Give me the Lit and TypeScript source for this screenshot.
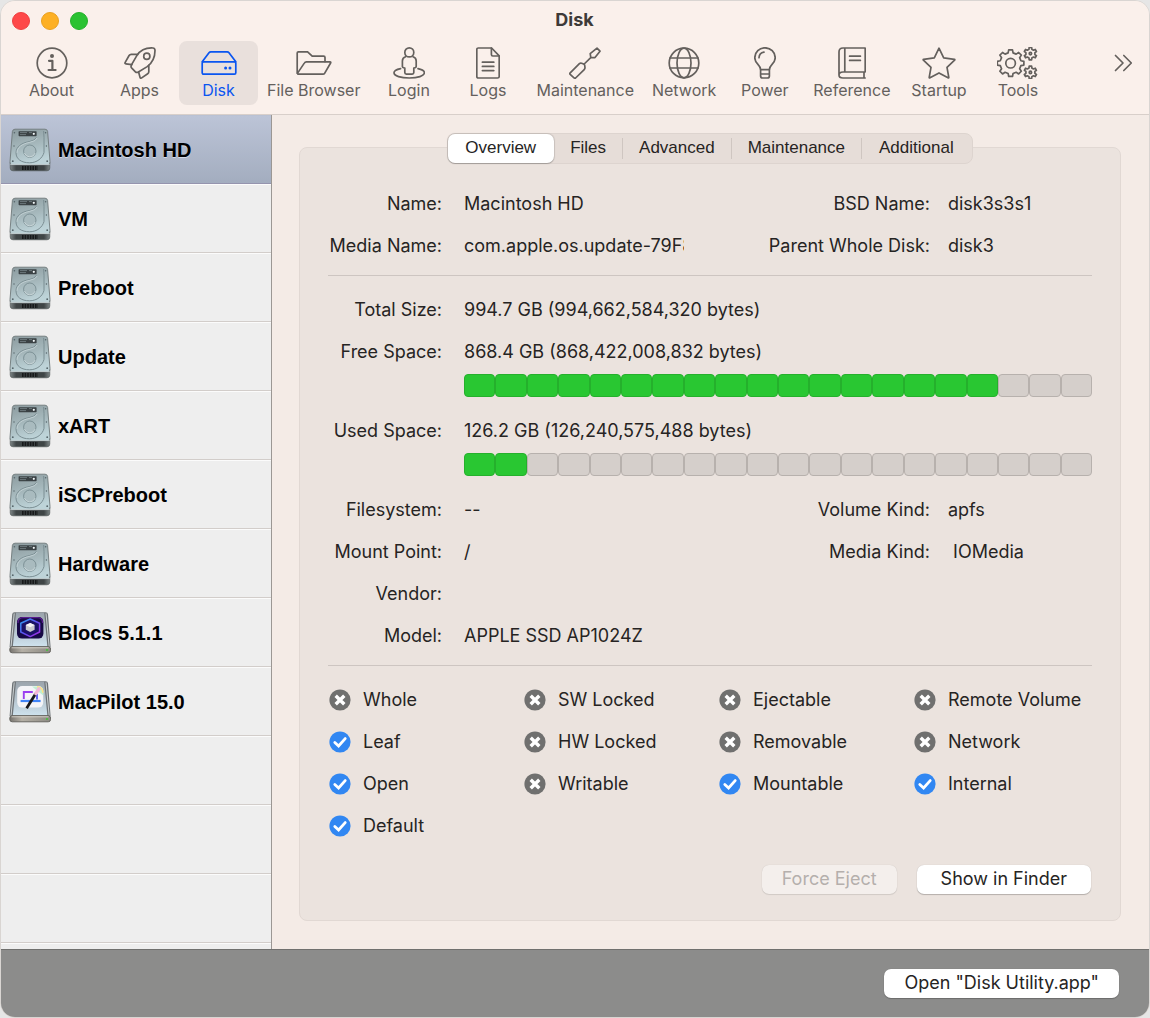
import { LitElement, html, svg, css, nothing, type SVGTemplateResult } from "lit";
import { customElement, property, state } from "lit/decorators.js";
import { classMap } from "lit/directives/class-map.js";

/** Outline of a cog: teeth between an inner and an outer radius. */
function gear(cx: number, cy: number, inner: number, outer: number, teeth: number): string {
  const step = (Math.PI * 2) / teeth;
  const at = (r: number, a: number) =>
    `${(cx + r * Math.sin(a)).toFixed(2)} ${(cy - r * Math.cos(a)).toFixed(2)}`;
  const points: string[] = [];
  for (let i = 0; i < teeth; i++) {
    const a = i * step;
    points.push(
      at(inner, a - step * 0.3),
      at(outer, a - step * 0.18),
      at(outer, a + step * 0.18),
      at(inner, a + step * 0.3),
    );
  }
  return `M${points.join("L")}Z`;
}

interface Glyph {
  width: number;
  art: SVGTemplateResult;
}

const glyphs: Record<string, Glyph> = {
  about: {
    width: 32,
    art: svg`<circle cx="16" cy="16" r="14.8"/><circle cx="16" cy="9" r="2" class="solid"/>
      <path d="M13 13.8h3.4v9M12.6 23h7" stroke-width="2.2"/>`,
  },
  apps: {
    width: 32,
    art: svg`<path d="M29 1C22 .6 16.5 3 12.8 8.6L7.6 17.6c-.9 1.6-.8 2.6.2 3.6l3.6 3.6c.9.9 1.8.9 3 .2l8.8-5.4C28.8 15.4 31 10 31 3.4 31 1.8 30.5 1.1 29 1z"/>
      <circle cx="22.8" cy="9.3" r="3.1"/>
      <path d="M13.6 7.4H7.2c-1 0-1.600.3-2.100 1.100L1.200 15.400c-.5.9-.2 1.400.7 1.500l6 .7M24.800 18.400v6.300c0 .9-.3 1.500-1.100 2l-6 4.200c-.8.500-1.500.3-1.700-.6L14.600 25"/>`,
  },
  disk: {
    width: 36,
    art: svg`<path d="M1.200 14.800 8 5.700Q8.700 4.800 9.800 4.800H26.200Q27.300 4.800 28 5.700L34.800 14.800" />
      <rect x="1.200" y="14.800" width="33.600" height="12.400" rx="1.400"/>
      <circle cx="24.600" cy="21" r="1.500" class="solid"/><circle cx="29" cy="21" r="1.500" class="solid"/>`,
  },
  files: {
    width: 36,
    art: svg`<path d="M1.200 26V6Q1.200 4.800 2.400 4.800H11.600L16.200 9.200H27.600Q29 9.200 29 10.600V14.600"/>
      <path d="M2 27.200H27Q28.100 27.200 28.600 26.300L34.600 16Q35.200 14.900 34 14.900H10.400Q9 14.900 8.300 16.100L1.400 26.400"/>`,
  },
  login: {
    width: 32,
    art: svg`<circle cx="16.300" cy="5.400" r="4.500"/>
      <path d="M12.600 9.700Q9.400 10.600 9.400 14V19.600Q9.400 20.800 11.800 21.200V25.600Q11.800 27.200 13.400 27.200H19.200Q20.800 27.200 20.800 25.600V21.200Q23.200 20.800 23.200 19.600V14Q23.200 10.600 20 9.700"/>
      <path d="M7.600 21.600C3.600 22.400 1 23.800 1 25.800 1 29 8 31 16.300 31S31.400 29 31.400 25.800C31.400 23.800 29 22.400 25 21.600"/>`,
  },
  logs: {
    width: 24,
    art: svg`<path d="M2.200 1H15.600L23.200 8.800V29.400Q23.200 31 21.600 31H2.400Q.8 31 .8 29.400V2.400Q.8 1 2.200 1z"/>
      <path d="M15.400 1.200V7.600Q15.400 9 16.800 9H23M6.400 15.200H17.800M6.400 19.400H17.800M6.400 23.600H17.800"/>`,
  },
  maintenance: {
    width: 32,
    art: svg`<path d="M1.200 25.800 10.400 16.600Q11.400 15.800 12.600 16.200L14.600 17Q15.600 17.400 15.700 18.400L16 20.800Q16 21.800 15.200 22.600L6.600 31Q5.800 31.500 5 30.800L1.200 27.400Q.5 26.600 1.200 25.800z"/>
      <path d="M15.200 17 22 10.400M21.800 10.600 21.200 6.600 28 1.200 31 4.200 26 10.600z"/>`,
  },
  network: {
    width: 32,
    art: svg`<circle cx="16" cy="16" r="14.800"/><ellipse cx="16" cy="16" rx="7" ry="14.800"/>
      <path d="M2 11H30M2 21H30"/>`,
  },
  power: {
    width: 22,
    art: svg`<path d="M6.600 22.600C6.600 17.600.8 17 .8 10.800A10.200 10 0 0 1 21.200 10.800C21.200 17 15.400 17.600 15.400 22.600z"/>
      <path d="M6.600 22.600V29Q6.600 31 8.600 31H13.400Q15.400 31 15.400 29V22.600M6.600 27H15.400M5 10.800A6 6 0 0 1 10 5.200"/>`,
  },
  reference: {
    width: 28,
    art: svg`<path d="M27.200 1V25H5Q1 25 1 28 1 31 5 31H27.200M26 25V31M1 28V5Q1 1 5 1H27.200M6.800 1V25"/>
      <path d="M11.600 9.200H22.400M11.600 13.400H22.400"/>`,
  },
  startup: {
    width: 34,
    art: svg`<path d="M17 1.200 21.700 10.900 32.400 12.400Q33.200 12.600 32.600 13.200L25 20.400 26.800 30.400Q26.900 31.200 26 30.800L17 25.900 8 30.800Q7.100 31.200 7.200 30.400L9 20.400 1.400 13.200Q.8 12.600 1.600 12.400L12.300 10.900z"/>`,
  },
  tools: {
    width: 41,
    art: svg`<path d=${gear(13.6, 16.2, 10.6, 13.4, 8)}/><circle cx="13.600" cy="16.200" r="4.800"/>
      <path d=${gear(33.4, 6.6, 4.6, 6.4, 6)}/><circle cx="33.400" cy="6.600" r="1.200"/>
      <path d=${gear(33.4, 25.4, 4.6, 6.4, 6)}/><circle cx="33.400" cy="25.400" r="1.200"/>`,
  },
};

@customElement("tool-button")
export class ToolButton extends LitElement {
  @property() label = "";
  @property() glyph = "about";
  @property({ type: Boolean, reflect: true }) selected = false;

  static styles = css`
    :host {
      display: block;
    }
    .tool {
      box-sizing: border-box;
      display: flex;
      flex-direction: column;
      align-items: center;
      gap: 1px;
      width: 100%;
      min-width: 79px;
      height: 64px;
      margin: 0;
      padding: 6px 9px 0;
      border: 0;
      border-radius: 8px;
      background: none;
      color: #64605d;
      font: 16px/20px Inter, "Liberation Sans", sans-serif;
      white-space: nowrap;
    }
    .selected {
      background: #e9e0dc;
      color: #0a55f0;
    }
    .icon {
      display: block;
      height: 32px;
      fill: none;
      stroke: currentColor;
      stroke-width: 1.7;
      stroke-linejoin: round;
      stroke-linecap: round;
    }
    .solid {
      fill: currentColor;
      stroke: none;
    }
  `;

  render() {
    const g = glyphs[this.glyph];
    return html`<button
      class=${classMap({ tool: true, selected: this.selected })}
      aria-pressed=${this.selected ? "true" : "false"}
    >
      <svg class="icon" width=${g.width} height="32" viewBox="0 0 ${g.width} 32" aria-hidden="true">
        ${g.art}
      </svg>
      ${this.label}
    </button>`;
  }
}

@customElement("drive-icon")
export class DriveIcon extends LitElement {
  @property() kind = "internal";

  static styles = css`
    :host {
      display: block;
      flex: none;
    }
    svg {
      display: block;
    }
  `;

  private internal() {
    return svg`
      <defs>
        <linearGradient id="lid" x1="0" y1="0" x2=".3" y2="1">
          <stop offset="0" stop-color="#8b9a9e"/><stop offset=".5" stop-color="#a3b5b9"/><stop offset="1" stop-color="#bdd3d8"/>
        </linearGradient>
        <linearGradient id="base" x1="0" y1="0" x2="1" y2="0">
          <stop offset="0" stop-color="#7d8586"/><stop offset=".15" stop-color="#3f4546"/><stop offset=".85" stop-color="#3f4546"/><stop offset="1" stop-color="#7d8586"/>
        </linearGradient>
      </defs>
      <path d="M1.200 34h39.600v6q0 2.800-2.800 2.800H4Q1.200 42.800 1.200 40z" fill="url(#base)" stroke="#4c5253" stroke-width=".6"/>
      <path d="M6 1.200h30q2.200 0 2.600 2.200L41 33.600q.2 3.200-2.200 3.200H3.200Q.8 36.800 1 33.600L3.400 3.400Q3.800 1.200 6 1.200z" fill="url(#lid)" stroke="#6f797b" stroke-width=".9"/>
      <path d="M1.400 36.400h39.200" stroke="#d4e0e2" stroke-width=".8"/>
      <path d="M13 39h16M13 41h16" stroke="#17191a" stroke-width="1.800" stroke-dasharray="1.600 1"/>
      <rect x="9.600" y="3.200" width="18" height="5" rx=".6" fill="#3a4144"/>
      <path d="M11 4.600h7M11 6.600h6M20 4.600h3" stroke="#78858a" stroke-width=".8"/>
      <circle cx="24.800" cy="5.800" r="1.100" fill="#f2f7f8"/>
      <path d="M27.400 9.400q-1 3-7.200 4.200C12.400 15 7 18.800 7 24.800c0 6.400 5.600 10 13.400 10 7.800 0 13.200-4.800 14.600-10.400V9.400L34.600 3" fill="none" stroke="#7b8e93" stroke-width="1"/>
      <path d="M28.200 10q-1 3-7.800 4.400C13 15.800 8 19.400 8 24.800" fill="none" stroke="#d0dde0" stroke-width=".7"/>
      <circle cx="20.800" cy="23.200" r="6.200" fill="#a9bbbf" stroke="#71858a" stroke-width=".8"/>
      <path d="M15.400 25.200a5.800 5.800 0 0 0 10.800 0" fill="none" stroke="#dce8ea" stroke-width=".7"/>
      <g fill="#56656a"><circle cx="5.400" cy="4.800" r=".8"/><circle cx="36.600" cy="4.800" r=".8"/><circle cx="5" cy="18" r=".7"/><circle cx="37.400" cy="18" r=".7"/><circle cx="3.800" cy="33.200" r=".9"/><circle cx="38.200" cy="33.200" r=".9"/></g>`;
  }

  private external(badge: SVGTemplateResult) {
    return svg`
      <defs>
        <linearGradient id="top" x1="0" y1="0" x2="0" y2="1">
          <stop offset="0" stop-color="#9aa3ab"/><stop offset=".5" stop-color="#b5c3cd"/><stop offset="1" stop-color="#cfe3ee"/>
        </linearGradient>
        <linearGradient id="front" x1="0" y1="0" x2="1" y2="0">
          <stop offset="0" stop-color="#77746f"/><stop offset=".3" stop-color="#b5b0a6"/><stop offset="1" stop-color="#8d8a83"/>
        </linearGradient>
        <linearGradient id="hex" x1="0" y1="0" x2="1" y2="1">
          <stop offset="0" stop-color="#2fa5f2"/><stop offset=".5" stop-color="#5d4df0"/><stop offset="1" stop-color="#a92be0"/>
        </linearGradient>
      </defs>
      <path d="M5.600 1.200h31q2.200 0 2.400 2L41.600 36H.6L3.200 3.200q.2-2 2.400-2z" fill="#6d7276"/>
      <path d="M5.200 2.400 2 36M37 2.400 40.200 36" stroke="#d7dcde" stroke-width=".9"/>
      <path d="M7 1.400h28.200L38.400 36H3.800z" fill="url(#top)"/>
      <rect x=".8" y="35.600" width="40.800" height="6.200" rx="2.400" fill="url(#front)" stroke="#5e5c58" stroke-width=".9"/>
      <path d="M2.600 36.800h37" stroke="#dedbd4" stroke-width=".8"/>
      <circle cx="38" cy="39" r="1.100" fill="#43c439"/>
      ${badge}`;
  }

  private blocs() {
    return svg`<rect x="8" y="6" width="26.400" height="21.600" rx="5" fill="#160a45"/>
      <path d="M9 12q0-5.400 5-5.400h14.600q5 0 5 5.400" fill="none" stroke="#5b1d8f" stroke-width="1.200"/>
      <path d="M21.200 8 30.600 12.200V21L21.200 25.600 11.800 21V12.200z" fill="#1b1266" stroke="url(#hex)" stroke-width="1.500" stroke-linejoin="round"/>
      <path d="M21.200 12 25.600 14V18.800L21.200 21 16.800 18.800V14z" fill="#c9c9cf"/>
      <path d="M21.200 12 25.600 14 21.200 16.200 16.800 14z" fill="#f5f5f7"/>`;
  }

  private pilot() {
    return svg`<rect x="8.200" y="6" width="26" height="21.600" rx="5" fill="#f4f4f7"/>
      <path d="M23 6.400h6.400q4.800 0 4.800 5v4z" fill="#bff0d4"/>
      <path d="M28 6.800q6 .4 5.800 6" stroke="#ffe183" stroke-width="1.600" fill="none"/>
      <path d="M14.800 19V12h9" fill="none" stroke="#9a3ff0" stroke-width="1.900"/>
      <path d="M28 14v5.400" fill="none" stroke="#5a5cf4" stroke-width="1.900"/>
      <path d="M11.600 21h20" stroke="#3f83f7" stroke-width="2.200"/>
      <path d="M17.600 28.200 26.800 13.600" stroke="#17171b" stroke-width="2.800"/>
      <path d="M26.800 13.600 30 8.800" stroke="#f2b8d8" stroke-width="3.400" stroke-linecap="round"/>`;
  }

  render() {
    const art =
      this.kind === "blocs"
        ? this.external(this.blocs())
        : this.kind === "macpilot"
          ? this.external(this.pilot())
          : this.internal();
    return html`<svg width="42" height="44" viewBox="0 0 42 44" aria-hidden="true">${art}</svg>`;
  }
}

@customElement("capacity-bar")
export class CapacityBar extends LitElement {
  @property({ type: Number }) filled = 0;
  @property({ type: Number }) total = 20;
  @property() label = "";

  static styles = css`
    .bar {
      display: flex;
      height: 23px;
    }
    .cell {
      box-sizing: border-box;
      flex: 1 1 0;
      border: 1px solid #b7b1ad;
      border-radius: 4px;
      background: #d5cfcb;
    }
    .on {
      border-color: #25b02c;
      background: #29c732;
    }
  `;

  render() {
    return html`<div
      class="bar"
      role="meter"
      aria-label=${this.label}
      aria-valuemin="0"
      aria-valuemax=${this.total}
      aria-valuenow=${this.filled}
    >
      ${Array.from(
        { length: this.total },
        (_, i) => html`<span class=${classMap({ cell: true, on: i < this.filled })}></span>`,
      )}
    </div>`;
  }
}

interface Pair {
  label: string;
  value: string;
}

const tools = [
  ["About", "about"],
  ["Apps", "apps"],
  ["Disk", "disk"],
  ["File Browser", "files"],
  ["Login", "login"],
  ["Logs", "logs"],
  ["Maintenance", "maintenance"],
  ["Network", "network"],
  ["Power", "power"],
  ["Reference", "reference"],
  ["Startup", "startup"],
  ["Tools", "tools"],
];

const volumes = [
  ["Macintosh HD", "internal"],
  ["VM", "internal"],
  ["Preboot", "internal"],
  ["Update", "internal"],
  ["xART", "internal"],
  ["iSCPreboot", "internal"],
  ["Hardware", "internal"],
  ["Blocs 5.1.1", "blocs"],
  ["MacPilot 15.0", "macpilot"],
];

const tabs = ["Overview", "Files", "Advanced", "Maintenance", "Additional"];

const flags: Array<Array<[string, boolean]>> = [
  [["Whole", false], ["SW Locked", false], ["Ejectable", false], ["Remote Volume", false]],
  [["Leaf", true], ["HW Locked", false], ["Removable", false], ["Network", false]],
  [["Open", true], ["Writable", false], ["Mountable", true], ["Internal", true]],
  [["Default", true]],
];

@customElement("app-root")
export class AppRoot extends LitElement {
  @state() private tool = "Disk";
  @state() private volume = "Macintosh HD";
  @state() private tab = "Overview";

  static styles = css`
    :host {
      display: block;
      color: #262423;
      font: 18px/24px Inter, "Liberation Sans", sans-serif;
      background: #e6e6e6;
    }
    .window {
      box-sizing: border-box;
      display: flex;
      flex-direction: column;
      min-height: 100vh;
      border: 1px solid #d9d5d2;
      border-radius: 15px;
      overflow: hidden;
      background: #f4ebe6;
    }
    .header {
      background: #faf0eb;
      border-bottom: 1px solid #d8cfca;
    }
    .titlebar {
      display: grid;
      grid-template-columns: 1fr auto 1fr;
      align-items: center;
      height: 40px;
      padding: 0 12px 0 11px;
    }
    .lights {
      display: flex;
      gap: 11px;
    }
    .light {
      box-sizing: border-box;
      width: 18px;
      height: 18px;
      padding: 0;
      border: 1px solid #ee3f40;
      border-radius: 50%;
      background: #fe4849;
    }
    .minimise {
      border-color: #e9a01f;
      background: #fdb024;
    }
    .zoom {
      border-color: #24b02c;
      background: #2ac232;
    }
    .title {
      margin: 0;
      padding-bottom: 2px;
      font-size: 18px;
      font-weight: 700;
      line-height: 24px;
      color: #3d3a38;
    }
    .toolbar {
      display: flex;
      align-items: flex-start;
      padding: 0 12px 9px 11px;
    }
    .toolbar tool-button:first-child {
      margin-right: 9px;
    }
    .more {
      display: flex;
      margin: 9px 0 0 auto;
      padding: 4px;
      border: 0;
      background: none;
      color: #64605d;
    }
    .more svg {
      display: block;
      fill: none;
      stroke: currentColor;
      stroke-width: 1.7;
      stroke-linecap: round;
      stroke-linejoin: round;
    }
    .body {
      flex: 1;
      display: flex;
    }
    .sidebar {
      box-sizing: border-box;
      flex: none;
      display: flex;
      flex-direction: column;
      width: 271px;
      border-right: 1px solid #9b9794;
      background: #eeeeee;
    }
    .volume {
      box-sizing: border-box;
      display: flex;
      align-items: center;
      gap: 7px;
      width: 100%;
      height: 69px;
      padding: 0 8px;
      border: 0;
      border-top: 1px solid #fbfbfb;
      border-bottom: 1px solid #d2cdca;
      background: #eeeeee;
      color: #000;
      font: bold 20px/24px "Liberation Sans", Arial, sans-serif;
      text-align: left;
    }
    .current {
      border-top-color: #b9c1d3;
      border-bottom-color: #9594ae;
      background: linear-gradient(#bcc4d7, #a3adbf);
      text-shadow: 0 1px 0 #d4dae6;
    }
    .blank {
      flex: 1;
      background: repeating-linear-gradient(
        #fbfbfb 0 1px,
        #eeeeee 1px 68px,
        #d2cdca 68px 69px
      );
    }
    .main {
      flex: 1;
      min-width: 0;
      display: flex;
      flex-direction: column;
      padding: 18px 28px 28px 27px;
    }
    .tabs {
      z-index: 1;
      box-sizing: border-box;
      align-self: center;
      display: flex;
      height: 31px;
      margin-bottom: -17px;
      border: 1px solid #ddd4cf;
      border-radius: 8px;
      background: #e6ddd8;
    }
    .tab {
      display: flex;
      margin: 0;
      padding: 4px 0;
      border: 0;
      border-radius: 7px;
      background: none;
      color: #262423;
      font: 17px/20px "Liberation Sans", Arial, sans-serif;
    }
    .tab:first-child,
    .tab:last-child {
      padding: 4px 1px;
    }
    .tab-text {
      padding: 0 16px;
      border-right: 1px solid transparent;
    }
    .divided {
      border-right-color: #cfc6c1;
    }
    .active {
      background: #fff;
      box-shadow: 0 0 1px 1px #0000001c, 0 1px 1px #0000002e;
    }
    .panel {
      flex: 1;
      display: flex;
      flex-direction: column;
      padding: 35px 28px 26px;
      border: 1px solid #e1d8d3;
      border-radius: 8px;
      background: #ebe3de;
    }
    .rule {
      width: 100%;
      height: 1px;
      margin: 8px 0 13px;
      border: 0;
      background: #cdc5c1;
    }
    .pairs {
      margin: 0;
    }
    .row {
      display: grid;
      grid-template-columns: minmax(0, 9fr) minmax(0, 10fr);
      align-items: center;
      height: 42px;
    }
    .wide {
      grid-template-columns: minmax(0, 1fr);
    }
    .pair {
      display: grid;
      grid-template-columns: 114px minmax(0, 1fr);
      gap: 22px;
      padding-right: 6px;
    }
    .side {
      grid-template-columns: minmax(0, 1fr) 144px;
      gap: 18px;
      padding-right: 0;
    }
    .label {
      text-align: right;
      white-space: nowrap;
    }
    .value {
      margin: 0;
      overflow: hidden;
      white-space: pre;
    }
    .meter {
      padding: 1px 0 13px 136px;
    }
    .flags {
      display: grid;
      grid-template-columns: repeat(3, minmax(0, 195fr)) minmax(0, 178fr);
      grid-auto-rows: 42px;
      align-items: center;
      margin: 0;
      padding: 0 0 0 1px;
      list-style: none;
    }
    .flag {
      display: flex;
      align-items: center;
      gap: 12px;
      white-space: nowrap;
    }
    .flag:last-child {
      grid-column: 1;
    }
    .flag svg {
      flex: none;
    }
    .actions {
      display: flex;
      justify-content: flex-end;
      gap: 20px;
      margin-top: auto;
      padding-top: 18px;
      padding-right: 1px;
    }
    .push {
      height: 29px;
      margin: 0;
      padding: 0 20px 2px;
      border: 0;
      border-radius: 7px;
      background: #fff;
      box-shadow: 0 0 1px #00000030, 0 1px 1px #00000038;
      color: #262423;
      font: 18px/24px Inter, "Liberation Sans", sans-serif;
      white-space: nowrap;
    }
    .roomy {
      padding: 0 24px 2px;
    }
    .push:disabled {
      background: #f4efec;
      box-shadow: 0 0 1px #00000028, 0 1px 1px #00000018;
      color: #b5afac;
    }
    .footer {
      display: flex;
      align-items: center;
      justify-content: flex-end;
      height: 67px;
      padding: 0 30px;
      border-top: 1px solid #70706e;
      background: #8c8c8b;
    }
  `;

  private row(left: Pair, right?: Pair) {
    return html`<div class=${classMap({ row: true, wide: !right })}>
      <div class="pair">
        <dt class="label">${left.label}</dt>
        <dd class="value">${left.value}</dd>
      </div>
      ${right
        ? html`<div class="pair side">
            <dt class="label">${right.label}</dt>
            <dd class="value">${right.value}</dd>
          </div>`
        : nothing}
    </div>`;
  }

  private flag(name: string, on: boolean) {
    return html`<li class="flag">
      <svg width="22" height="22" viewBox="0 0 22 22" role="img" aria-label=${on ? "Yes" : "No"}>
        <circle cx="11" cy="11" r="10.600" fill=${on ? "#3187f2" : "#70706f"} />
        <path
          d=${on ? "M5.800 11.400 9.600 15 16.200 7.600" : "M6.700 6.700 15.300 15.300M15.300 6.700 6.700 15.300"}
          fill="none"
          stroke="#fff"
          stroke-width=${on ? 2.8 : 3.4}
          stroke-linecap=${on ? "round" : "butt"}
        />
      </svg>
      ${name}
    </li>`;
  }

  render() {
    const tabIndex = tabs.indexOf(this.tab);
    return html`<div class="window">
      <header class="header">
        <div class="titlebar">
          <div class="lights">
            <button class="light" aria-label="Close"></button>
            <button class="light minimise" aria-label="Minimise"></button>
            <button class="light zoom" aria-label="Zoom"></button>
          </div>
          <h1 class="title">Disk</h1>
        </div>
        <nav class="toolbar" aria-label="Toolbar">
          ${tools.map(
            ([label, glyph]) => html`<tool-button
              .label=${label}
              .glyph=${glyph}
              ?selected=${label === this.tool}
              @click=${() => (this.tool = label)}
            ></tool-button>`,
          )}
          <button class="more" aria-label="More items">
            <svg width="19" height="18" viewBox="0 0 19 18" aria-hidden="true">
              <path d="M1.500 1.500 9 9 1.500 16.500M9.800 1.500 17.300 9 9.800 16.500" />
            </svg>
          </button>
        </nav>
      </header>

      <div class="body">
        <nav class="sidebar" aria-label="Volumes">
          ${volumes.map(
            ([name, kind]) => html`<button
              class=${classMap({ volume: true, current: name === this.volume })}
              @click=${() => (this.volume = name)}
            >
              <drive-icon .kind=${kind}></drive-icon>
              <span>${name}</span>
            </button>`,
          )}
          <div class="blank"></div>
        </nav>

        <main class="main">
          <div class="tabs" role="tablist">
            ${tabs.map(
              (name, i) => html`<button
                class=${classMap({ tab: true, active: i === tabIndex })}
                role="tab"
                aria-selected=${i === tabIndex ? "true" : "false"}
                @click=${() => (this.tab = name)}
              >
                <span
                  class=${classMap({
                    "tab-text": true,
                    divided: i !== tabIndex && i + 1 !== tabIndex && i < tabs.length - 1,
                  })}
                  >${name}</span
                >
              </button>`,
            )}
          </div>

          <section class="panel" role="tabpanel" aria-label=${this.tab}>
            <dl class="pairs">
              ${this.row(
                { label: "Name:", value: "Macintosh HD" },
                { label: "BSD Name:", value: "disk3s3s1" },
              )}
              ${this.row(
                { label: "Media Name:", value: "com.apple.os.update-79F8" },
                { label: "Parent Whole Disk:", value: "disk3" },
              )}
            </dl>
            <hr class="rule" />
            <dl class="pairs">
              ${this.row({ label: "Total Size:", value: "994.7 GB (994,662,584,320 bytes)" })}
              ${this.row({ label: "Free Space:", value: "868.4 GB (868,422,008,832 bytes)" })}
            </dl>
            <div class="meter">
              <capacity-bar label="Free Space" .filled=${17}></capacity-bar>
            </div>
            <dl class="pairs">
              ${this.row({ label: "Used Space:", value: "126.2 GB (126,240,575,488 bytes)" })}
            </dl>
            <div class="meter">
              <capacity-bar label="Used Space" .filled=${2}></capacity-bar>
            </div>
            <dl class="pairs">
              ${this.row(
                { label: "Filesystem:", value: "--" },
                { label: "Volume Kind:", value: "apfs" },
              )}
              ${this.row(
                { label: "Mount Point:", value: "/" },
                { label: "Media Kind:", value: " IOMedia" },
              )}
              ${this.row({ label: "Vendor:", value: "" })}
              ${this.row({ label: "Model:", value: "APPLE SSD AP1024Z" })}
            </dl>
            <hr class="rule" />
            <ul class="flags">
              ${flags.flat().map(([name, on]) => this.flag(name, on))}
            </ul>
            <div class="actions">
              <button class="push" disabled>Force Eject</button>
              <button class="push roomy">Show in Finder</button>
            </div>
          </section>
        </main>
      </div>

      <footer class="footer">
        <button class="push">Open "Disk Utility.app"</button>
      </footer>
    </div>`;
  }
}
